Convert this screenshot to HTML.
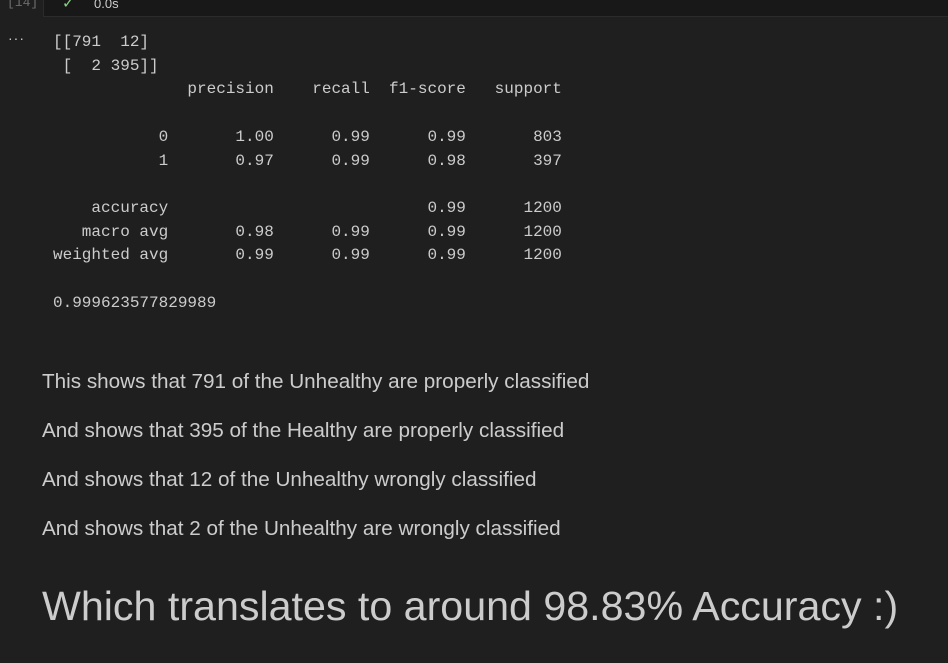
<!DOCTYPE html>
<html><head><meta charset="utf-8"><style>
html,body{margin:0;padding:0;background:#1f1f1f;width:948px;height:663px;overflow:hidden;}
body{position:relative;font-family:"Liberation Sans",sans-serif;color:#cccccc;}
.bar{position:absolute;left:43px;top:0;width:905px;height:16px;background:#181818;border-bottom:1px solid #2b2b2b;border-left:1px solid #2b2b2b;}
.cnt{position:absolute;left:7px;top:-5px;font:13px "Liberation Mono",monospace;color:#6e6e6e;}
.chk{position:absolute;left:62px;top:-6px;color:#89d185;font-size:15px;}
.time{position:absolute;left:94px;top:-4px;font-size:13px;color:#cccccc;}
.dots{position:absolute;left:8px;top:30px;color:#cccccc;font-size:14px;letter-spacing:1px;}
pre{position:absolute;left:53px;top:31px;margin:0;font:16px/23.7px "Liberation Mono",monospace;color:#cccccc;}
.p{position:absolute;left:42px;font-size:20.7px;color:#cccccc;white-space:nowrap;}
h1{position:absolute;left:42px;top:583px;margin:0;font-weight:normal;font-size:41.2px;color:#cccccc;white-space:nowrap;}
</style></head><body>
<div class="cnt">[14]</div>
<div class="bar"></div>
<div class="chk">✓</div>
<div class="time">0.0s</div>
<div class="dots">···</div>
<pre>[[791  12]
 [  2 395]]
              precision    recall  f1-score   support

           0       1.00      0.99      0.99       803
           1       0.97      0.99      0.98       397

    accuracy                           0.99      1200
   macro avg       0.98      0.99      0.99      1200
weighted avg       0.99      0.99      0.99      1200

0.999623577829989</pre>
<div class="p" style="top:370px">This shows that 791 of the Unhealthy are properly classified</div>
<div class="p" style="top:419px">And shows that 395 of the Healthy are properly classified</div>
<div class="p" style="top:468px">And shows that 12 of the Unhealthy wrongly classified</div>
<div class="p" style="top:517px">And shows that 2 of the Unhealthy are wrongly classified</div>
<h1>Which translates to around 98.83% Accuracy :)</h1>
</body></html>
